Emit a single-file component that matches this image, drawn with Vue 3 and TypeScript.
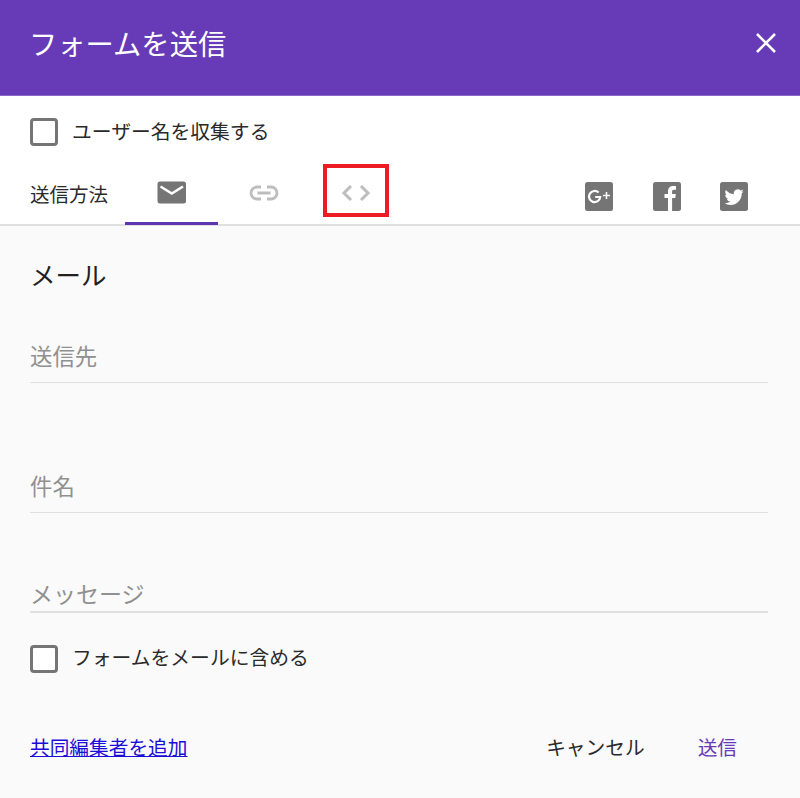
<script setup lang="ts">
const fields = [
  { label: '送信先', cls: 'to' },
  { label: '件名', cls: 'subject' },
  { label: 'メッセージ', cls: 'message' },
]
</script>

<template>
  <div class="dialog">
    <header class="header">
      <h1 class="title">フォームを送信</h1>
      <button class="close" aria-label="閉じる">
        <svg width="20" height="20" viewBox="0 0 20 20">
          <path d="M1 1 19 19M19 1 1 19" stroke="#fff" stroke-width="2.6" fill="none" />
        </svg>
      </button>
    </header>

    <section class="top">
      <label class="check first">
        <span class="box"></span>
        <span class="check-text">ユーザー名を収集する</span>
      </label>

      <div class="tabs">
        <span class="method">送信方法</span>
        <div class="tab active">
          <svg width="30" height="23" viewBox="0 0 30 23">
            <rect x="0.5" y="0.5" width="28.5" height="22" rx="2.5" fill="#757575" />
            <path d="M3.5 5.5 14.8 12.5 26 5.5" stroke="#fff" stroke-width="2.6" fill="none" />
          </svg>
        </div>
        <div class="tab share">
          <svg width="30" height="16" viewBox="0 0 30 16">
            <path d="M12 2H8a6 6 0 0 0 0 12h4M18 2h4a6 6 0 0 1 0 12h-4M8.500 8h13" stroke="#bdbdbd" stroke-width="2.800" fill="none" />
          </svg>
        </div>
        <div class="tab code">
          <svg width="30" height="18" viewBox="0 0 30 18">
            <path d="M10 2 3 9l7 7M20 2l7 7-7 7" stroke="#bdbdbd" stroke-width="3" fill="none" />
          </svg>
          <span class="highlight"></span>
        </div>

        <div class="social">
          <svg class="soc" width="28" height="29" viewBox="0 0 28 29">
            <rect width="28" height="29" rx="2.500" fill="#757575" />
            <path d="M13.600 10.600a5.600 5.600 0 1 0 1.600 4.400h-5" stroke="#fff" stroke-width="2.200" fill="none" />
            <path d="M18 13.500h7M21.500 10v7" stroke="#fff" stroke-width="1.500" fill="none" />
          </svg>
          <svg class="soc" width="28" height="29" viewBox="0 0 28 29">
            <rect width="28" height="29" rx="2.500" fill="#757575" />
            <path d="M15 29V16h-3.500v-4H15V9.500C15 6 17 4 20.200 4c1.300 0 2.300.1 2.800.2v3.600h-2c-1.500 0-1.900.7-1.900 1.900V12h3.700l-.5 4h-3.200v13z" fill="#fff" />
          </svg>
          <svg class="soc" width="28" height="29" viewBox="0 0 28 29">
            <rect width="28" height="29" rx="2.500" fill="#757575" />
            <g transform="translate(4.500 5.500) scale(0.8)">
              <path fill="#fff" d="M23.953 4.570a10 10 0 0 1-2.825.775 4.958 4.958 0 0 0 2.163-2.723c-.951.555-2.005.959-3.127 1.184a4.920 4.920 0 0 0-8.384 4.482C7.690 8.095 4.067 6.130 1.640 3.162a4.822 4.822 0 0 0-.666 2.475c0 1.710.870 3.213 2.188 4.096a4.904 4.904 0 0 1-2.228-.616v.060a4.923 4.923 0 0 0 3.946 4.827 4.996 4.996 0 0 1-2.212.085 4.936 4.936 0 0 0 4.604 3.417 9.867 9.867 0 0 1-6.102 2.105c-.390 0-.779-.023-1.170-.067a13.995 13.995 0 0 0 7.557 2.209c9.053 0 13.998-7.496 13.998-13.985 0-.210 0-.420-.015-.630A9.935 9.935 0 0 0 24 4.590z" />
            </g>
          </svg>
        </div>
      </div>
    </section>

    <main class="body">
      <h2 class="heading">メール</h2>
      <div v-for="f in fields" :key="f.cls" class="field" :class="f.cls">
        <span>{{ f.label }}</span>
      </div>
      <label class="check include">
        <span class="box"></span>
        <span class="check-text">フォームをメールに含める</span>
      </label>
      <footer class="footer">
        <a class="link" href="#">共同編集者を追加</a>
        <div class="actions">
          <button class="btn">キャンセル</button>
          <button class="btn send">送信</button>
        </div>
      </footer>
    </main>
  </div>
</template>

<style>
html, body { margin: 0; background: #fafafa; }
</style>

<style scoped>
.dialog {
  width: 800px;
  height: 798px;
  overflow: hidden;
  display: flex;
  flex-direction: column;
  font-family: "Noto Sans CJK JP", "Noto Sans", sans-serif;
  color: #2a2a2a;
}
.header {
  height: 96px;
  flex: none;
  box-sizing: border-box;
  background: #673ab7;
  border-bottom: 1px solid #8a68c9;
  display: flex;
  align-items: center;
  justify-content: space-between;
  padding: 0 24px 9px 30px;
}
.title {
  margin: 0 0 0 -1px;
  font-size: 28.300px;
  font-weight: 400;
  line-height: 40px;
  color: #fff;
}
.close {
  padding: 0;
  border: 0;
  background: none;
  display: flex;
  margin-top: -1px;
}
.top {
  background: #fff;
  height: 130px;
  flex: none;
  box-sizing: border-box;
  border-bottom: 2px solid #e0e0e0;
  display: flex;
  flex-direction: column;
}
.check {
  display: flex;
  align-items: center;
  gap: 14px;
  font-size: 19.800px;
  line-height: 28px;
  padding-left: 30px;
}
.check.first { margin-top: 22px; }
.first .check-text { margin-top: -2px; }
.include .check-text { margin-top: -4px; }
.box {
  width: 28px;
  height: 28px;
  box-sizing: border-box;
  border: 3px solid #757575;
  border-radius: 4px;
  background: #fff;
}
.tabs {
  flex: 1;
  display: flex;
  align-items: flex-start;
  padding-left: 30px;
  margin-top: 18px;
}
.method {
  width: 95px;
  font-size: 19.500px;
  line-height: 28px;
  margin-top: 16px;
}
.tab {
  width: 93px;
  height: 61px;
  box-sizing: border-box;
  display: flex;
  justify-content: center;
  align-items: flex-start;
  padding-top: 17px;
  position: relative;
}
.tab.active {
  border-bottom: 3px solid #5e35b1;
}
.share svg {
  margin-top: 4px;
  margin-left: -2px;
}
.code svg {
  margin-top: 3px;
  margin-left: -4px;
}
.highlight {
  position: absolute;
  left: 12px;
  top: 0;
  width: 66px;
  height: 53px;
  box-sizing: border-box;
  border: 4px solid #ed1c24;
}
.social {
  margin-left: auto;
  margin-right: 51.700px;
  display: flex;
  gap: 39.500px;
  padding-top: 18px;
  align-items: flex-start;
}
.body {
  flex: 1;
  background: #fafafa;
  padding: 0 32px 0 30px;
  display: flex;
  flex-direction: column;
}
.heading {
  margin: 30px 0 0 0;
  font-size: 25.500px;
  font-weight: 400;
  line-height: 36px;
  color: #212121;
}
.field {
  border-bottom: 1px solid #e0e0e0;
  font-size: 22.400px;
  line-height: 32px;
  color: #909090;
  padding-bottom: 11px;
}
.to { margin-top: 47px; }
.subject { margin-top: 86px; }
.message {
  margin-top: 64px;
  padding-bottom: 2px;
  font-size: 23px;
  border-bottom-width: 2px;
}
.check.include {
  padding-left: 0;
  margin-top: 32px;
}
.footer {
  margin-top: 60px;
  display: flex;
  align-items: center;
  justify-content: space-between;
  font-size: 19.700px;
  line-height: 28px;
}
.link {
  color: #1a0dd8;
  text-decoration: underline;
}
.actions {
  display: flex;
  gap: 53px;
  padding-right: 31px;
}
.btn {
  padding: 0;
  border: 0;
  background: none;
  font: inherit;
  color: #2a2a2a;
}
.send { color: #673ab7; }
</style>
